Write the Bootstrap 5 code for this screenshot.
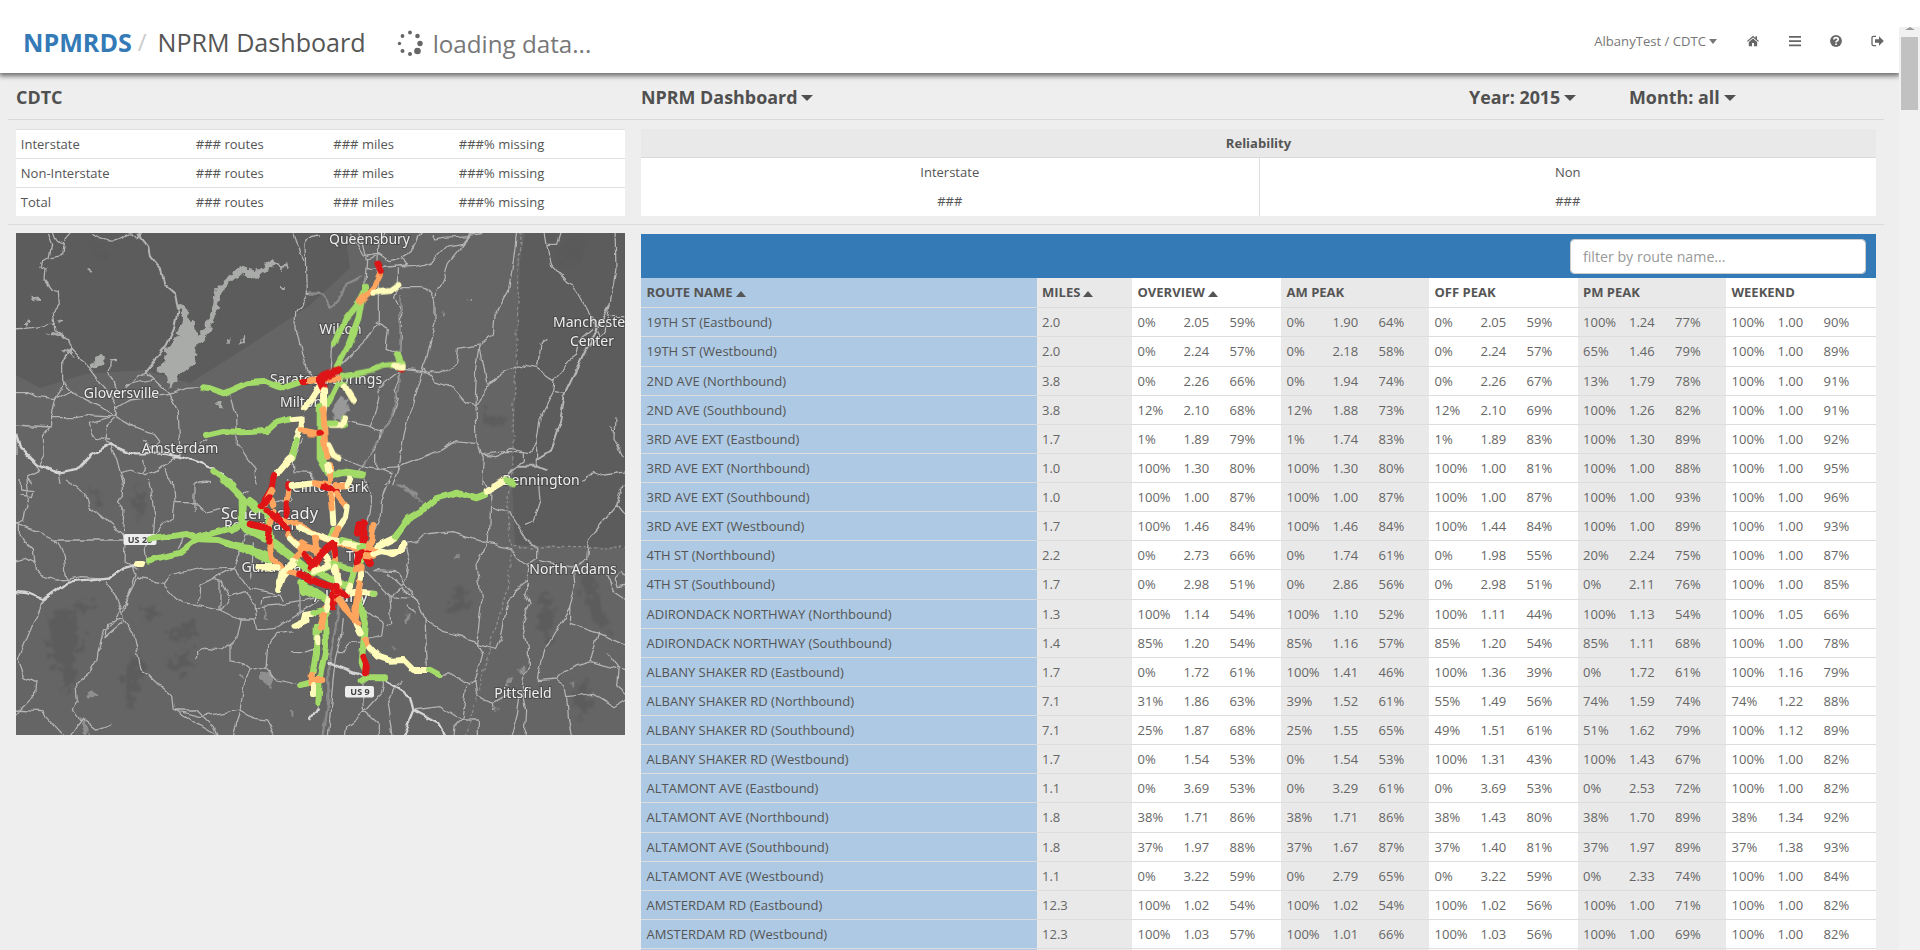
<!DOCTYPE html>
<html lang="en">
<head>
<meta charset="utf-8">
<title>NPMRDS / NPRM Dashboard</title>
<link href="https://cdn.jsdelivr.net/npm/bootstrap@5.3.0/dist/css/bootstrap.min.css" rel="stylesheet">
<style>
html, body { height: 950px; overflow: hidden; }
body { background: #eee; color: #555; font-family: "Open Sans", sans-serif; font-size: 13.03px; line-height: 20px; }
.topbar { width: 1899px; height: 73px; background: #fff; box-shadow: 0 2px 5px 1px rgba(0,0,0,.55); position: relative; z-index: 2; padding: 10px 15px 0 23px; }
.brand-name { font-size: 25.1px; font-weight: 700; color: #337ab7; }
.slash { font-size: 24px; color: #ccc; margin: 0 11px 0 6px; }
.page-name { font-size: 25.1px; color: #555; }
.loading { font-size: 24.2px; color: #777; padding-top: 3px; }
.usermenu { color: #777; font-size: 13.1px; }
.caret-down { display: inline-block; border: 4px solid transparent; border-top-color: currentColor; border-bottom: 0; vertical-align: 3px; margin-left: 3px; }
.usermenu .caret-down { border-width: 5px 4px 0; vertical-align: 2px; }
.scrolltrack { width: 21px; height: 923px; top: 27px; right: 0; background: #f1f1f1; z-index: 3; }
.scrollcap { width: 21px; height: 27px; top: 0; right: 0; background: #fff; z-index: 3; }
.scrollthumb { width: 17px; height: 73px; margin: 10px 0 0 2px; background: #c1c1c1; }
.page-area { width: 1876px; margin-left: 8px; }
.titlerow { height: 46.5px; padding-top: 14px; border-bottom: 1.5px solid #d9d9d9; font-size: 17.9px; font-weight: 700; color: #505050; }
.titlerow .caret-down { border-width: 6px 6px 0; margin-left: 4px; }
.leftcol { width: 609px; margin-left: 8px; }
.rightcol { width: 1235px; margin-left: 16px; }
.summaryrow { height: 105px; padding-top: 9px; border-bottom: 1.5px solid #dcdcdc; }
.gridtable { width: 100%; margin: 0; }
.gridtable, .gridtable thead, .gridtable tbody { display: block; }
.gridtable tr { display: grid; }
.gridtable th, .gridtable td { padding: 0 0 0 5.5px; border: 0; white-space: nowrap; background: none; }
.gridtable.counts td { padding-left: 4.8px; }
.counts tr { grid-template-columns: 175px 137.5px 125.5px 1fr; height: 29.2px; line-height: 28px; background: #fff; border-top: 1.5px solid #e0e0e0; }
.reliab { height: 87px; background: #fff; text-align: center; line-height: 29px; }
.reliab-head { height: 29px; background: #e9e9e9; border-bottom: 1.5px solid #dadada; font-weight: 700; line-height: 28px; }
.reliab-cell { height: 58px; padding-top: .5px; }
.reliab-cell + .reliab-cell { border-left: 1px solid #ddd; }
.bluebar { height: 44.5px; background: #337ab7; padding: 5px 10px 0 0; }
.bluebar .form-control { width: 296px; height: 35px; font-size: 14.2px; border: 1px solid #ccc; border-radius: 4px; padding: 6px 12px; color: #555; }
.bluebar .form-control::placeholder { color: #999; }
.routes tr { grid-template-columns: 395.5px 95.5px 149px 148px 148.5px 148.5px 1fr; height: 29.13px; line-height: 28px; border-top: 1.3px solid #ddd; }
.routes thead tr { height: 28.3px; border: 0; font-weight: 700; line-height: 29px; }
.routes tbody { border-top: 1.2px solid #ddd; }
.routes .shade { background: #e9e9e9; }
.routes .name { background: #adc9e3; }
.routes .plain { background: #fff; }
.routes .trio { display: grid; grid-template-columns: 46px 46px 1fr; }
.routes td { color: #666; }
.routes .name { color: #555; }
.sort-up { display: inline-block; border: 5px solid transparent; border-bottom: 6px solid #555; border-top: 0; margin-left: 3px; vertical-align: 0; }
.mapbox { display: block; margin-top: 8px; }
.mapbox text { font-family: "Noto Sans", sans-serif; fill: #eee; stroke: #3a3a3a; stroke-width: 2px; stroke-opacity: .55; paint-order: stroke; text-anchor: middle; }
.roads path { fill: none; stroke: #b4b4b4; stroke-width: 3.8; stroke-linejoin: round; }
.roads .thick { stroke: #d4d4d4; stroke-width: 7; }
.roads .river { stroke: #8a8a8a; stroke-width: 7; }
.roads .state { stroke: #909090; stroke-dasharray: 9 7; }
.seg path { fill: none; stroke-width: 18; stroke-linecap: round; stroke-linejoin: round; }
.seg .g { stroke: #a2db68; } .seg .o { stroke: #ffa55e; } .seg .r { stroke: #de1416; } .seg .y { stroke: #fffbba; }
.water { fill: #a9aba9; }
</style>
</head>
<body>
<div class="topbar d-flex align-items-start">
  <div class="d-flex align-items-center" style="height:64px">
    <span class="brand-name">NPMRDS</span><span class="slash">/</span><span class="page-name">NPRM Dashboard</span>
    <svg width="26" height="30" viewBox="0 0 26 30" style="margin:1px 10px 0 31px" fill="#666"><circle cx="13" cy="4.500" r="1.900"/><circle cx="20.500" cy="8" r="2.300"/><circle cx="23" cy="15.500" r="2.700"/><circle cx="20.500" cy="23" r="3.300"/><circle cx="13" cy="26" r="2"/><circle cx="5.500" cy="23" r="2"/><circle cx="2.500" cy="15.500" r="1.700"/><circle cx="5.500" cy="8" r="1.900"/></svg>
    <span class="loading">loading data...</span>
  </div>
  <div class="usermenu ms-auto d-flex align-items-center" style="height:62px">
    <span>AlbanyTest / CDTC<span class="caret-down"></span></span>
    <svg style="margin-left:30px" width="12" height="12" viewBox="0 0 12 12" fill="#666"><path d="M6 .8 0 6l.8.8L6 2.500l5.200 4.300.8-.8-2-1.700V1.200H8.400v1.700zM6 3.500 1.800 7v4.200h3.200V8h2v3.200h3.200V7z"/></svg>
    <svg style="margin-left:30px" width="12" height="12" viewBox="0 0 12 12" fill="#666"><path d="M0 1h12v1.800H0zM0 5.200h12V7H0zM0 9.400h12v1.800H0z"/></svg>
    <svg style="margin-left:29px" width="12" height="12" viewBox="0 0 12 12"><circle cx="6" cy="6" r="5.900" fill="#666"/><path d="M3.900 4.500C4 2 8.200 2.200 8.200 4.400 8.200 6 6 5.800 6 7.500M6 8.400v1.500" fill="none" stroke="#fff" stroke-width="1.700"/></svg>
    <svg style="margin-left:29px" width="13" height="12" viewBox="0 0 13 12" fill="#666"><path d="M5 1.300H2.500Q1 1.300 1 3v6q0 1.700 1.500 1.700H5" fill="none" stroke="#666" stroke-width="1.300"/><path d="M4 4.200h4V1.300L12.800 6 8 10.700V7.800H4z"/></svg>
  </div>
</div>
<div class="scrollcap position-absolute"></div>
<div class="scrolltrack position-absolute"><div class="position-absolute" style="left:6px;top:0;border:5px solid transparent;border-top:0;border-bottom:3px solid #999"></div><div class="scrollthumb"></div></div>

<div class="page-area">
  <div class="titlerow d-flex">
    <div class="leftcol">CDTC</div>
    <div class="rightcol d-flex"><span style="width:828px">NPRM Dashboard<span class="caret-down"></span></span><span style="width:160px">Year: 2015<span class="caret-down"></span></span><span>Month: all<span class="caret-down"></span></span></div>
  </div>
  <div class="summaryrow d-flex">
    <div class="leftcol">
      <table class="gridtable counts"><tbody>
        <tr><td>Interstate</td><td>### routes</td><td>### miles</td><td>###% missing</td></tr>
        <tr><td>Non-Interstate</td><td>### routes</td><td>### miles</td><td>###% missing</td></tr>
        <tr><td>Total</td><td>### routes</td><td>### miles</td><td>###% missing</td></tr>
      </tbody></table>
    </div>
    <div class="rightcol"><div class="reliab">
      <div class="reliab-head">Reliability</div>
      <div class="d-flex"><div class="reliab-cell w-50">Interstate<br>###</div><div class="reliab-cell w-50">Non<br>###</div></div>
    </div></div>
  </div>
  <div class="d-flex align-items-start">
    <div class="leftcol">
<svg class="mapbox" width="609" height="502" viewBox="16 233 609 502">
<defs>
<filter id="soft" x="-10%" y="-10%" width="120%" height="120%" color-interpolation-filters="sRGB"><feTurbulence type="fractalNoise" baseFrequency=".11" numOctaves="3" seed="4" result="n"/><feDisplacementMap in="SourceGraphic" in2="n" scale="28" xChannelSelector="R" yChannelSelector="G"/><feGaussianBlur stdDeviation=".8"/></filter>
<filter id="shore" filterUnits="userSpaceOnUse" x="0" y="220" width="640" height="530" color-interpolation-filters="sRGB"><feTurbulence type="fractalNoise" baseFrequency=".15" numOctaves="2" seed="9" result="n"/><feDisplacementMap in="SourceGraphic" in2="n" scale="9" xChannelSelector="R" yChannelSelector="G"/><feGaussianBlur stdDeviation=".5"/></filter>
<filter id="wiggle" filterUnits="userSpaceOnUse" x="0" y="220" width="640" height="530" color-interpolation-filters="sRGB"><feTurbulence type="fractalNoise" baseFrequency=".07" numOctaves="2" seed="3" result="n"/><feDisplacementMap in="SourceGraphic" in2="n" scale="7" xChannelSelector="R" yChannelSelector="G"/></filter>
<filter id="bumps" filterUnits="userSpaceOnUse" x="0" y="220" width="640" height="530" color-interpolation-filters="sRGB"><feTurbulence type="fractalNoise" baseFrequency=".08" numOctaves="1" seed="5" result="n"/><feDisplacementMap in="SourceGraphic" in2="n" scale="5" xChannelSelector="R" yChannelSelector="G"/></filter>
</defs>
<rect x="16" y="233" width="609" height="502" fill="#646564"/>
<path fill="#5b5c5b" d="M16 233H345L350 268 310 305 250 345 190 383 145 370 85 374 40 388 16 375zM525 233H625V548L515 545 512 480 520 262z"/>
<path fill="#666" d="M345 233h175v30h-70l-50 40z" opacity=".5"/>
<g fill="#595959" opacity=".75" filter="url(#soft)"><path d="M48 622l15-12 12 8 5 25-10 25-12-2-10-20zM60 670l14-5 3 20-12 5z"/><path d="M170 630l20-7 12 10-12 10-20-3zM165 660l20-5 12 12-18 6z"/><path d="M560 240l25 3-5 20-22 0z"/><path d="M130 655l16 5-8 35-10 12-4-22z"/><path d="M455 590l12-2-3 20-12 6zM488 412l18 4-6 10-14-2z"/><path d="M545 590l10 15-6 40-12-20zM580 570l14 6 16 60-12-10-14-30zM575 680l18 10-8 30-10-14z"/><path d="M75 602l14-2 2 8-12 4zM90 240l14 4-2 14zM140 610l16-4 4 6-14 6zM85 485l20 10-8 10zM130 485l18 20-10 15z"/></g>
<g filter="url(#shore)">
<g transform="translate(0 225) scale(.33333)" class="water">
<path d="M540 232l25 30 20 40 5 25 10 15 5 6-20 8-25 0-30-30 20-40-18-50z"/>
<path d="M500 365l35-30 45-10 10 60-10 32-25 22-20 12-12 24-14 10-10-30-22-12-8-12 25-22z"/>
<path fill="none" stroke="#a9aba9" stroke-width="19" stroke-linejoin="round" d="M598 350L620 315 645 255 655 200 680 170 725 132 765 152 800 125 822 110"/>
<path fill="none" stroke="#a9aba9" stroke-width="8" d="M815 108L835 118 845 132 858 115 868 130"/>
<path d="M270 428l18-32 20-8 10 10-25 28-20 8z"/><path d="M648 528l15 5 6 18-12-6z"/><path d="M140 325l25-5 30 12-15 8-30-8zM185 372l25 2 12 20-22-10z"/><path d="M90 215l30 3v10l-25-3zM75 292l14-5 5 15-15 3zM170 295l20-20-10 22zM678 350l12-14-5 18zM712 360l14-24 8 2-14 20zM264 134l14 3-3 9zM840 180l14 8-4 8-10-8z"/></g>
<g transform="translate(310 225) scale(.33333)"><path fill="#999" d="M88 510l20 10 4 30-12 36-28 0-5-28z"/><path class="water" d="M395 262l13 4-6 7zM470 219h15l-5 8z"/></g>
<g transform="translate(310 480) scale(.33333)" fill="#8f8f8f"><path d="M260 5l50 25 32 45-25-22-30-20-32-20zM430 232l20-10-12 20zM285 402l14-4-4 35-12-5zM582 620l18-34 12 0-15 30zM624 565l20-6 6 10-20 14zM244 500l12 0-4 14zM545 685h20l-6 12zM780 605l12 6-2 12z"/></g>
<g transform="translate(0 480) scale(.33333)" fill="#8f8f8f"><path d="M780 575l30 0 12 30-12 18-14-20-16-5zM715 582l18 0-6 14zM790 390l8 0 6 30-6 2zM260 640l20-6 6 14-20 8zM240 710l15 5 12 45-15 2zM870 695h10v12z"/></g>
</g>
<g class="roads" filter="url(#wiggle)">
<g transform="translate(0 225) scale(.33333)">
<path d="M145 22L158 60 150 98 125 108 120 125 135 132 132 165 155 195 175 200 178 240 160 262 168 318 205 340 215 372 270 430 285 450 330 508 350 540 348 575M160 22Q170 60 190 55L185 92 155 98M190 50L215 22M280 25Q330 60 365 35T418 40L428 22M40 312L100 308 168 296M215 372L188 405 188 480 165 515 155 560 155 600 130 630 132 690 115 720M40 500L80 500 115 515 160 520 215 498M188 470L215 498 240 515 300 545 345 575M155 577L230 578 260 572 340 576M40 600L155 606M348 403L328 405 325 445 340 465 350 495 375 495M437 440L380 485M437 440L460 462 378 480M437 440L505 505 535 560 540 690M345 575L350 550 390 525 430 520 505 508 560 490 605 488M348 575L400 605 460 625 480 650M340 576L268 598 275 625 290 640 330 645M345 580L316 610 316 650 335 658M480 650L455 675 430 645M600 655L618 642M690 505L710 570 712 660 740 700 765 730 768 780M335 660L350 710 368 780M362 742L395 735 435 752 470 740 520 700 540 690M495 730L520 780M880 22L890 60 915 110M960 30Q920 30 918 60L922 210 890 260 888 310 905 380 920 440 945 450M922 205H960M48 610L48 690M110 722L120 740 80 760 95 780M175 742L180 780M905 640L880 710 882 740 938 742V780M430 700L440 730 425 750"/>
<path d="M418 22L425 40 445 65 450 95 480 130 490 180 525 210 535 245 520 320 500 360 437 440" style="stroke-width:6"/>
<path class="thick" d="M40 600L60 670 110 718 175 742 230 732 270 690 335 658 400 688 430 688 480 685 540 695 640 730 700 765"/></g>
<g transform="translate(310 225) scale(.33333)">
<path class="river" d="M155 155L110 175 98 210 65 245 35 208 0 205"/>
<path d="M150 22L170 110 165 170 165 205M200 90L165 110M170 90L205 85 240 110 280 98 290 120 170 132M265 130V180L250 220 275 270 272 400 270 440 255 490 265 520 240 590 212 620 205 660 155 720 130 760M205 130L205 290 175 340 95 420M197 290L232 310 225 370 265 385M270 125Q340 130 375 100L410 65 460 55 480 30 540 22M370 30L370 45 400 40 480 35M270 185H330Q370 190 375 240L375 290 350 400 340 425 325 480 300 560 280 640 265 740M375 220L390 190 415 115 480 35M310 22L335 25 300 80 275 95M620 22L610 110 595 200 555 270 550 330 510 360 500 430 495 540 498 650 520 700 515 780M280 432L380 445 440 420 445 370 510 360 530 470M340 430L375 470 430 490 470 535 495 542 560 450 620 420 680 430 735 468 780 405 800 390 810 345 850 310M532 480L560 450M712 340L690 360 680 425M735 468L730 500 690 580 680 660 680 715M735 500L765 505M705 22L715 85 725 120 770 170 790 180 840 270 870 330M750 22L740 58 713 58M915 15L918 130 900 240 885 320 830 370 765 505M270 440L205 490 210 520 200 560 180 605M110 590L180 605 212 618M95 700L150 720 200 730 270 725M200 680L200 725 250 745M250 780L270 725 380 680 430 650 498 655M520 690L560 695 600 670 660 680 680 655M515 690L580 680 640 680 640 710 600 740M915 580L912 640 940 700M895 600L912 625M955 272H890M820 770L850 740 880 750 955 740M60 445L65 350 90 300M225 22L205 75 204 110M120 22L160 90 175 95M250 740L225 780"/>
<path style="stroke-width:6" d="M900 240L830 370 765 505 750 590 720 680 680 705 680 725M590 750L620 725 680 725 715 735"/>
<path class="river" d="M270 210V430L265 490 245 570 212 630M205 650L160 720" style="stroke-width:5"/>
<path class="state" d="M630 22L625 200 618 420 610 580 608 780"/></g>
<g transform="translate(0 480) scale(.33333)">
<path d="M78 0L85 60 70 120 48 130M60 0L62 30 105 35 100 50 55 45M195 0L255 40 270 80 370 165M370 0L370 50 355 65 375 90 370 165 378 195 375 240 415 265M445 0L455 50 465 110 460 165 435 205 440 245M520 0L525 70 520 110 485 135 465 170M585 95V15Q600 0 630 5M525 70L595 72 620 95 690 80M40 125L165 180 370 180M165 180L190 225 195 280 205 298M40 245L75 235 105 250 110 270 130 290 165 300 205 298M55 130V165L100 210 105 255M205 298L240 290 330 295 375 260M415 290L365 390 340 430 310 450 290 540 270 575 230 610 235 660 220 690 240 720M315 305L350 355 372 420 400 460 425 575 450 590 515 650 520 690 650 765M372 415L320 430 315 470 345 445 370 425M400 255L408 285 380 360 370 400M415 295L490 310 530 355 550 370 610 380 660 390 720 420 765 420 770 450 830 445 960 360M490 310L510 285 600 265 700 262 735 170 760 170M700 262L745 325 800 335 825 340M700 262L640 295 600 315 595 370M640 295L665 300 690 350 730 335 765 370 770 420M660 300L660 390M660 390L690 355M720 420L710 470 690 490 690 540 720 545 750 570 790 560 800 550M690 490L665 510 615 505 590 520 590 540M880 455L835 460 800 500 795 560 830 600 900 615M750 570L735 600 720 690 700 765M520 690L600 710 720 690 760 715 800 720 830 775M520 690L590 690 640 740 655 775M130 360L100 430 75 490 55 540 75 590 105 605 100 650 60 690 48 705M40 690L125 695 200 775M210 775L245 715 290 750 330 735M870 515H920L945 505M770 380L840 375 900 365 960 350M780 370L785 350 840 345 850 365M900 290V400M755 290L760 190M550 170L535 210M670 0L720 45 740 40M860 0L870 60 820 70"/>
<path class="thick" d="M35 338L85 342 130 360 205 305 330 292 375 260 410 252"/></g>
<g transform="translate(310 480) scale(.33333)">
<path d="M90 320L80 440 55 560 55 660 40 775" class="river"/>
<path d="M100 420L95 460 75 540 62 680 55 775M165 0L185 55 180 100 165 160M240 0L215 60 210 120 190 160M520 0L540 40 535 185 500 250 515 360 500 490 518 520 495 600 500 650 545 670 600 640M285 190L325 185 345 165 430 155 530 188 600 205 620 235 655 265 655 320M285 190L298 250 285 310 240 350 245 430 230 440M190 272L260 275 285 310 325 365 345 420 352 555M165 270L240 350 300 355M235 280L325 365M345 420L400 455 460 470 500 490 560 505 575 470 590 380 615 330 655 300M150 380L220 430 215 465 160 480 120 490 95 515 80 515M655 310L645 340 660 370 635 430 655 500 655 560 640 600 625 700 605 775M540 80L600 100 650 180 680 200 680 240 650 260M685 0L690 60 670 120 645 130M690 245L790 265 795 320 780 380 705 510 690 560 685 605 735 600 760 575 840 545 955 575M785 265L830 240 835 180 920 75 955 120M940 10L920 75M890 285L910 330 955 360M780 380L778 430 865 460 955 500M865 460L840 545M890 515L925 560 920 620 955 650M735 600L765 615 770 650 850 640 915 680 955 655M770 650L775 710 785 775M310 690L390 680 455 720 505 720 505 775M455 720L470 620M390 585H430L475 615 495 600M235 670L260 620 280 600M235 670L250 775M225 590L215 640 170 690 110 740 105 775M155 600L160 690 205 730 205 775M545 670L545 690M290 380L320 400M455 720L435 740 430 775"/>
<path d="M640 640L650 690 645 775M915 300L935 280 955 290M915 300L925 320 955 315"/>
<path class="thick" d="M50 545L165 590M225 590L245 615 300 650 310 690 275 775M310 690L385 730 410 775M25 680L0 720"/>
<path class="state" d="M600 0L590 90 605 200 595 310 530 540 465 775M610 200L955 205"/></g>
</g>
<g font-size="14">
<text x="369.500" y="244">Queensbury</text><text x="340.500" y="334">Wilton</text><text x="121.500" y="398">Gloversville</text><text x="326" y="384">Saratoga Springs</text><text x="301" y="407">Milton</text><text x="180" y="453">Amsterdam</text><text x="592" y="326.500">Manchester</text><text x="592" y="345.500">Center</text><text x="541" y="485">Bennington</text><text x="330" y="491.500">Clifton Park</text><text x="573" y="573.500">North Adams</text><text x="523" y="698">Pittsfield</text><text x="280" y="572">Guilderland</text><text x="259" y="530">Rotterdam</text><text x="360" y="561">Troy</text><text x="341" y="602" font-size="17">Albany</text><text x="269.500" y="518.500" font-size="16.400">Schenectady</text></g>
<g><rect x="123.500" y="534" width="33" height="11" rx="2" fill="#eee"/><rect x="345" y="686" width="29" height="11.500" rx="2" fill="#eee"/></g>
<g font-size="9" font-weight="700"><text x="140" y="543" style="fill:#444;stroke:none">US 20</text><text x="360" y="695" style="fill:#444;stroke:none">US 9</text></g>
<g filter="url(#bumps)">
<g class="seg" transform="translate(0 225) scale(.33333)">
<path class="g" d="M610 487L630 490 672 505 740 475 795 470 845 490 905 470"/><path class="r" d="M908 468h20"/><path class="o" d="M930 468L960 462"/>
<path class="g" d="M618 630L670 618 725 622 800 618 830 592 870 582"/><path class="y" d="M875 582L905 580 905 610M960 480L915 550"/><path class="g" d="M890 640L875 700"/><path class="y" d="M905 605L890 640 885 665M870 700L860 710 830 745"/><path class="o" d="M905 615L960 628"/><path class="g" d="M640 738L700 780"/></g>
<g class="seg" transform="translate(310 225) scale(.33333)">
<path class="g" d="M165 182V200L150 230 105 285 72 355M155 225L145 280 115 360 80 425"/><path class="o" d="M150 228L190 190 210 145"/><path class="y" d="M190 203L240 198 265 180"/><path class="r" d="M202 116L212 138"/>
<path class="g" d="M95 455L180 438 220 422 275 418 263 388"/><path class="y" d="M255 422L275 425"/><path class="r" style="stroke-width:5" d="M265 437h14"/><path class="o" d="M50 460H85M0 465H20"/><path class="g" d="M80 480L50 540M95 478L105 480"/><path class="y" d="M105 485L130 525M100 600L60 600M25 495L5 530"/><path class="r" style="stroke-width:24" d="M85 435L45 450 30 465 38 485"/><path class="g" d="M100 580L105 600M55 595H75"/><path class="y" d="M42 495V555M105 580L98 600"/><path class="g" style="stroke-width:20" d="M30 545L30 700 55 745"/><path class="o" d="M40 555L45 655M0 628H20"/><path class="r" d="M25 626h5"/><path class="y" d="M55 660L70 690 88 700M55 720L58 755"/><path class="g" d="M65 755L85 742 120 745 155 748"/><path class="y" d="M550 780L585 760"/><path class="g" d="M585 762L610 778"/></g>
<g class="seg" transform="translate(0 480) scale(.33333)">
<path class="g" d="M450 178L560 162 600 178 655 180 740 210 810 245M445 242L540 218 600 170 710 140M670 0L720 50 770 90M725 60V130L740 150 810 185 920 270"/><path class="y" d="M410 252H425"/><path class="y" d="M780 262H835M835 330L850 290 885 250"/><path class="y" d="M885 440L920 425 915 405 945 400"/><path class="g" style="stroke-width:22" d="M915 310V330L960 350"/></g>
<g class="seg" transform="translate(310 480) scale(.33333)">
<path class="y" d="M190 208L245 180"/><path class="g" d="M255 175L295 115 345 85 380 55 440 38 500 55 525 45"/><path class="y" d="M530 35L580 5"/><path class="g" d="M590 0L605 5"/><path class="y" d="M190 215L230 218 270 215 280 190"/>
<path class="g" d="M50 400L25 450M45 420L48 500 30 590M20 440L18 520 8 580M30 590L25 670M-30 615L0 608M145 350L165 430 155 550 165 570M225 592H170L155 602"/><path class="o" d="M45 385L35 440M80 340L115 400 140 430M145 345L138 410M5 585V610M10 600H40M165 480L172 492"/><path class="y" d="M22 470V490M12 615V640M140 435L152 460M178 500L205 530 240 542 280 540 310 570 350 570"/><path class="g" d="M360 570L388 585"/><path class="r" d="M160 530L168 550 165 580"/></g>
<g class="seg" transform="translate(230 440) scale(.33333)">
<path class="g" d="M0 135L40 175 35 245 100 275M60 180L105 215 120 260 125 295M0 270L25 260M0 315L60 325 120 350M50 255L110 290 170 335 250 400M200 0L185 50"/><path class="y" d="M182 55L165 75 145 98"/><path class="r" d="M132 105L125 145 105 178"/><path class="o" d="M125 150L105 190M125 180L130 195M175 150L170 185"/><path class="r" d="M175 145V135M170 190V225M118 172L98 195"/><path class="y" d="M185 138L250 130"/><path class="o" d="M255 130L290 135"/><path class="r" d="M280 140L320 155"/><path class="o" d="M320 138L350 136M320 160L345 195"/><path class="y" d="M350 135L358 115M350 200L345 235 325 265"/><path class="g" d="M270 0L275 50 300 110 350 95 395 102M310 270L300 300"/><path class="o" d="M282 0L290 50M300 75V130"/><path class="y" d="M295 75L298 95M305 165L310 250"/><path class="o" d="M302 165L305 205M325 265L315 290"/>
<path class="o" d="M115 290L125 355 165 390 215 405M160 240L210 255 270 290 380 325M115 265L130 215"/><path class="r" style="stroke-width:20" d="M60 252L115 265M110 210L155 250M140 230L175 275"/><path class="r" d="M95 195L115 175M120 265L115 305"/><path class="y" d="M210 262L250 280 290 295 380 315M85 382H140M145 450L155 400 195 360"/><path class="o" d="M175 285L220 335 260 380M200 350L230 320 265 330 300 370M215 310L250 330M255 290L260 340M310 330L320 390"/><path class="y" d="M180 295L200 315M280 345L300 370 320 400"/>
<path class="g" style="stroke-width:20" d="M215 430L220 455M215 430L270 465 300 490M270 400L330 430"/><path class="r" style="stroke-width:22" d="M210 402L260 425 305 440 320 460M315 445L308 500"/><path class="r" style="stroke-width:20" d="M225 340L245 375 290 325 310 310 315 345M265 355L240 385"/><path class="g" d="M250 400L310 370 370 390 395 360M330 430L360 440 375 380M335 300L390 315"/><path class="y" d="M250 395L295 375M315 380L325 430M360 440L350 460 380 455 430 458"/><path class="o" d="M395 380L390 430"/><path class="y" d="M345 310L400 318M393 400V415"/>
<path class="r" style="stroke-width:23" d="M383 275L387 255 402 250 400 300M385 345L380 370M405 345L420 370"/><path class="r" d="M380 340L430 330"/><path class="o" d="M430 255L425 300 410 325 435 328M405 348L430 350M390 380L375 385M390 430L380 480 375 520M325 480L345 510 385 550"/><path class="y" d="M440 318L490 295M430 345L455 335 490 345 515 330 520 310"/><path class="g" d="M495 290L540 235M385 320L400 318M428 458H430"/><path class="y" d="M295 480L290 510M190 560L220 545 225 525 245 525"/><path class="g" d="M250 520L275 512"/><path class="o" d="M280 525L272 560M320 455L330 450"/><path class="r" d="M335 455L350 465M320 435V455"/></g>
</g>
</svg>
    </div>
    <div class="rightcol" style="margin-top:9px">
      <div class="bluebar d-flex justify-content-end"><input class="form-control" placeholder="filter by route name..."></div>
      <table class="gridtable routes">
        <thead><tr><th class="name">ROUTE NAME<span class="sort-up"></span></th><th class="shade">MILES<span class="sort-up"></span></th><th class="plain">OVERVIEW<span class="sort-up"></span></th><th class="shade">AM PEAK</th><th class="plain">OFF PEAK</th><th class="shade">PM PEAK</th><th class="plain">WEEKEND</th></tr></thead>
        <tbody id="routeRows"></tbody>
      </table>
    </div>
  </div>
</div>
<script src="https://cdn.jsdelivr.net/npm/bootstrap@5.3.0/dist/js/bootstrap.bundle.min.js"></script>
<script>
// name | miles | overview | am | off | pm | weekend; each period is "percent index percent"
const rows = `19TH ST (Eastbound)|2.0|0 2.05 59|0 1.90 64|0 2.05 59|100 1.24 77|100 1.00 90
19TH ST (Westbound)|2.0|0 2.24 57|0 2.18 58|0 2.24 57|65 1.46 79|100 1.00 89
2ND AVE (Northbound)|3.8|0 2.26 66|0 1.94 74|0 2.26 67|13 1.79 78|100 1.00 91
2ND AVE (Southbound)|3.8|12 2.10 68|12 1.88 73|12 2.10 69|100 1.26 82|100 1.00 91
3RD AVE EXT (Eastbound)|1.7|1 1.89 79|1 1.74 83|1 1.89 83|100 1.30 89|100 1.00 92
3RD AVE EXT (Northbound)|1.0|100 1.30 80|100 1.30 80|100 1.00 81|100 1.00 88|100 1.00 95
3RD AVE EXT (Southbound)|1.0|100 1.00 87|100 1.00 87|100 1.00 87|100 1.00 93|100 1.00 96
3RD AVE EXT (Westbound)|1.7|100 1.46 84|100 1.46 84|100 1.44 84|100 1.00 89|100 1.00 93
4TH ST (Northbound)|2.2|0 2.73 66|0 1.74 61|0 1.98 55|20 2.24 75|100 1.00 87
4TH ST (Southbound)|1.7|0 2.98 51|0 2.86 56|0 2.98 51|0 2.11 76|100 1.00 85
ADIRONDACK NORTHWAY (Northbound)|1.3|100 1.14 54|100 1.10 52|100 1.11 44|100 1.13 54|100 1.05 66
ADIRONDACK NORTHWAY (Southbound)|1.4|85 1.20 54|85 1.16 57|85 1.20 54|85 1.11 68|100 1.00 78
ALBANY SHAKER RD (Eastbound)|1.7|0 1.72 61|100 1.41 46|100 1.36 39|0 1.72 61|100 1.16 79
ALBANY SHAKER RD (Northbound)|7.1|31 1.86 63|39 1.52 61|55 1.49 56|74 1.59 74|74 1.22 88
ALBANY SHAKER RD (Southbound)|7.1|25 1.87 68|25 1.55 65|49 1.51 61|51 1.62 79|100 1.12 89
ALBANY SHAKER RD (Westbound)|1.7|0 1.54 53|0 1.54 53|100 1.31 43|100 1.43 67|100 1.00 82
ALTAMONT AVE (Eastbound)|1.1|0 3.69 53|0 3.29 61|0 3.69 53|0 2.53 72|100 1.00 82
ALTAMONT AVE (Northbound)|1.8|38 1.71 86|38 1.71 86|38 1.43 80|38 1.70 89|38 1.34 92
ALTAMONT AVE (Southbound)|1.8|37 1.97 88|37 1.67 87|37 1.40 81|37 1.97 89|37 1.38 93
ALTAMONT AVE (Westbound)|1.1|0 3.22 59|0 2.79 65|0 3.22 59|0 2.33 74|100 1.00 84
AMSTERDAM RD (Eastbound)|12.3|100 1.02 54|100 1.02 54|100 1.02 56|100 1.00 71|100 1.00 82
AMSTERDAM RD (Westbound)|12.3|100 1.03 57|100 1.01 66|100 1.03 56|100 1.00 69|100 1.00 82`.split("\n");
document.getElementById("routeRows").innerHTML = rows.map(line => {
  const [name, miles, ...periods] = line.split("|");
  return `<tr><td class="name">${name}</td><td class="shade">${miles}</td>` + periods.map((p, i) => {
    const [a, b, c] = p.split(" ");
    return `<td class="trio ${i % 2 ? "shade" : "plain"}"><span>${a}%</span><span>${b}</span><span>${c}%</span></td>`;
  }).join("") + "</tr>";
}).join("") + '<tr><td class="name"></td><td class="shade"></td><td class="plain"></td><td class="shade"></td><td class="plain"></td><td class="shade"></td><td class="plain"></td></tr>';
</script>
</body>
</html>
